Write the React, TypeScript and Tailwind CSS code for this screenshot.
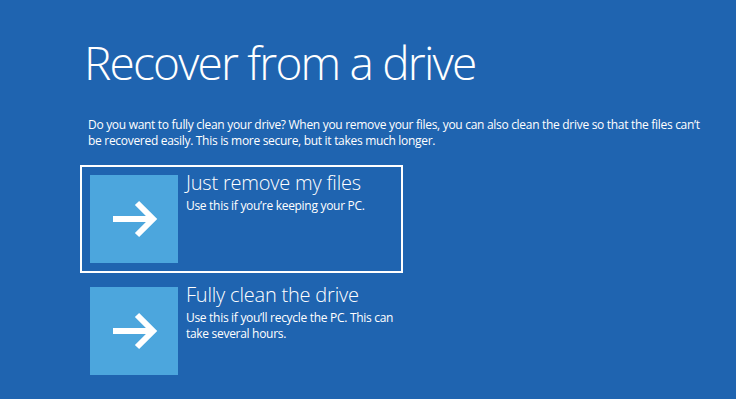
import React from "react";

function Arrow() {
  return (
    <svg width="88" height="88" viewBox="0 0 88 88" className="block">
      <path d="M23 44 H62" stroke="white" strokeWidth="6" fill="none" />
      <path d="M47 28 L63 44 L47 60" stroke="white" strokeWidth="6" fill="none" strokeLinejoin="miter" />
    </svg>
  );
}

function Item({ title, sub, selected }: { title: string; sub: string; selected?: boolean }) {
  return (
    <div
      className={
        "flex w-[323px] border-2 p-[8px] gap-[8px] " +
        (selected ? "border-white" : "border-transparent")
      }
    >
      <div className="w-[88px] h-[88px] shrink-0 bg-[#4ca6dd]">
        <Arrow />
      </div>
      <div className="flex flex-col -mt-[5px] w-[230px] shrink-0 -mr-[100px]">
        <div className="text-[20px] leading-[26px] font-light text-white tracking-[-0.2px]">{title}</div>
        <div className="text-[12px] leading-[16px] text-white mt-[2px] tracking-[-0.3px]">{sub}</div>
      </div>
    </div>
  );
}

export default function App() {
  return (
    <div
      className="w-[736px] h-[399px] bg-[#1f64b0] overflow-hidden text-white"
      style={{ fontFamily: "'Open Sans', 'Noto Sans', sans-serif" }}
    >
      <div className="pt-[39px] pl-[84px]">
        <h1 className="text-[46px] leading-none font-light tracking-[-1.8px]">Recover from a drive</h1>
      </div>
      <p className="mt-[32px] ml-[88px] w-[618px] text-[12px] leading-[16px] tracking-[-0.3px]">
        Do you want to fully clean your drive? When you remove your files, you can also clean the drive so that the
        files can’t be recovered easily. This is more secure, but it takes much longer.
      </p>
      <div className="ml-[80px] mt-[16px] flex flex-col gap-[4px]">
        <Item title="Just remove my files" sub="Use this if you’re keeping your PC." selected />
        <Item title="Fully clean the drive" sub="Use this if you’ll recycle the PC. This can take several hours." />
      </div>
    </div>
  );
}
